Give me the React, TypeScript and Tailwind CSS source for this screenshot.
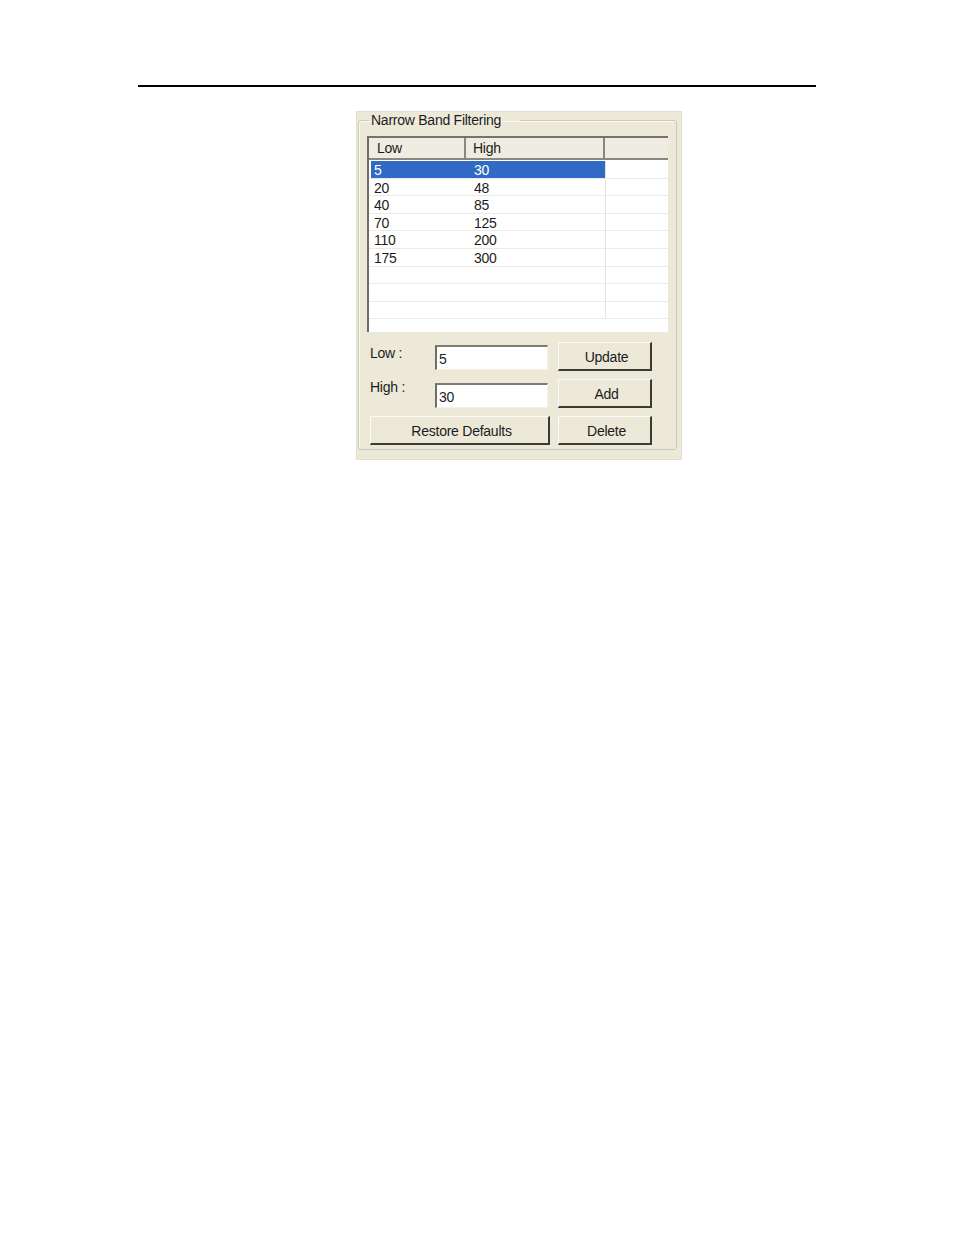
import React from 'react'

const rows = [
  { low: '5', high: '30' },
  { low: '20', high: '48' },
  { low: '40', high: '85' },
  { low: '70', high: '125' },
  { low: '110', high: '200' },
  { low: '175', high: '300' },
  { low: '', high: '' },
  { low: '', high: '' },
  { low: '', high: '' },
]

function WinButton({ label, className }: { label: string; className?: string }) {
  return (
    <button
      className={
        'flex h-[29px] items-center justify-center border-t border-l border-t-[#fbfaf4] border-l-[#fbfaf4] border-r-2 border-b-2 border-r-[#3a3a36] border-b-[#3a3a36] bg-[#ece9d8] pt-[1px] pl-[4px] text-[14px] leading-[16px] tracking-[-0.25px] text-[#1c1c1c] ' +
        (className ?? '')
      }
    >
      {label}
    </button>
  )
}

function WinInput({ value }: { value: string }) {
  return (
    <div className="flex h-[25px] w-[113px] items-end border-t-2 border-l-2 border-t-[#7d7b72] border-l-[#6f6d66] border-r border-b border-r-[#f3f2ea] border-b-[#f3f2ea] bg-white pb-[2px] pl-[2px] text-[14px] leading-[16px] text-[#1c1c1c]">
      {value}
    </div>
  )
}

export default function App() {
  return (
    <div
      className="h-[1235px] w-[954px] overflow-hidden bg-white tracking-[-0.25px]"
      style={{ fontFamily: '"Liberation Sans", Arial, sans-serif' }}
    >
      <div className="ml-[138px] mt-[85px] h-[2px] w-[678px] bg-black" />

      <div className="ml-[356px] mt-[24px] h-[349px] w-[326px] border border-[#e2dfcd] bg-[#ece9d8]">
        <fieldset className="ml-[1px] h-[338px] w-[319px] rounded-[3px] border border-[#cac8b8] px-[8px] shadow-[inset_1px_1px_0_#fbfaf3]">
          <legend className="ml-[2px] pl-[2px] pr-[19px] text-[14px] leading-[16px] text-[#1c1c1c]">
            Narrow Band Filtering
          </legend>

          {/* list view */}
          <div className="mt-[8px] h-[196px] w-[301px] border-t-2 border-l-2 border-t-[#75736b] border-l-[#6d6b64] bg-white">
            <div className="flex h-[22px] border-b-2 border-b-[#8a887e] bg-[#efede1] text-[14px] leading-[20px] text-[#1c1c1c]">
              <div className="w-[97px] border-r-2 border-r-[#8a887e] pl-[8px]">Low</div>
              <div className="w-[139px] border-r-2 border-r-[#8a887e] pl-[7px]">High</div>
              <div className="flex-1" />
            </div>
            <div className="pt-[1px]">
              {rows.map((r, i) => (
                <div key={i} className="flex h-[17.6px] border-b border-b-[#ebebe6] text-[14px] leading-[15px]">
                  <div
                    className={
                      'ml-[2px] flex w-[234px] ' +
                      (i === 0 ? 'bg-[#316ac5] text-white' : 'text-[#1c1c1c]')
                    }
                  >
                    <div className="w-[94px] pl-[3px] pt-[2px]">{r.low}</div>
                    <div className="w-[140px] pl-[9px] pt-[2px]">{r.high}</div>
                  </div>
                  <div className="flex-1 border-l border-l-[#e4e4de]" />
                </div>
              ))}
            </div>
          </div>

          {/* edit controls */}
          <div className="mt-[10px] grid grid-cols-[65px_115px_102px] grid-rows-[29px_29px_29px] gap-y-[8px] pl-[3px] text-[14px] leading-[16px] text-[#1c1c1c]">
            <div className="pt-[3px]">Low :</div>
            <div className="pt-[3px]">
              <WinInput value="5" />
            </div>
            <WinButton label="Update" className="ml-[8px] w-[94px]" />

            <div className="pt-0">High :</div>
            <div className="pt-[4px]">
              <WinInput value="30" />
            </div>
            <WinButton label="Add" className="ml-[8px] w-[94px]" />

            <WinButton label="Restore Defaults" className="col-span-2 w-[180px]" />
            <WinButton label="Delete" className="ml-[8px] w-[94px]" />
          </div>
        </fieldset>
      </div>
    </div>
  )
}
